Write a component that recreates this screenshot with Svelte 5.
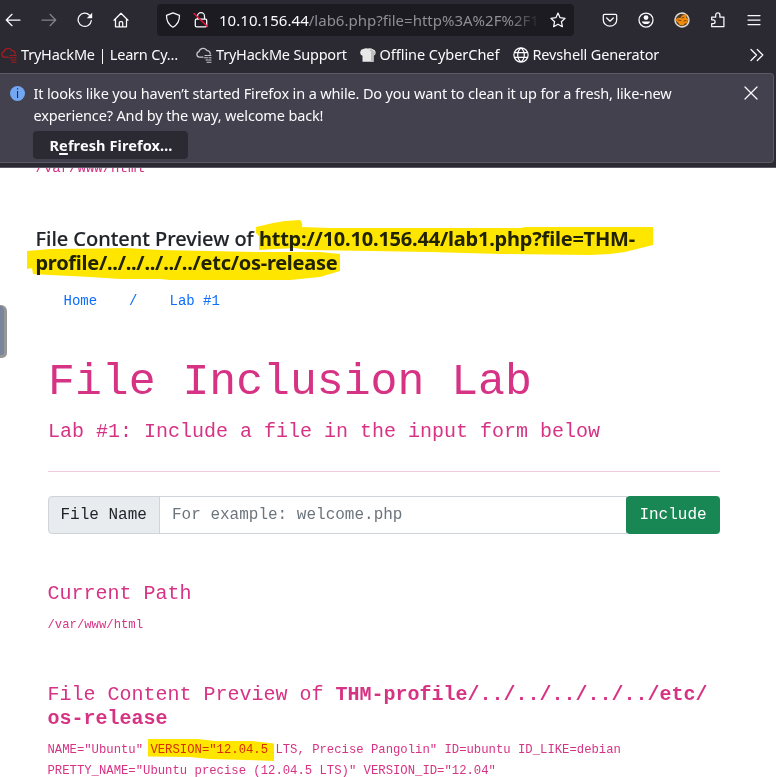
<script>
  const bookmarks = [
    { icon: 'cloud', label: 'TryHackMe | Learn Cy…', tone: '#a51c20', width: 195 },
    { icon: 'cloud', label: 'TryHackMe Support', tone: '#c9c9cd', width: 163.5 },
    { icon: 'chef', label: 'Offline CyberChef', tone: '#e8e8e8', width: 153 },
    { icon: 'globe', label: 'Revshell Generator', tone: '#fbfbfe', width: 170 }
  ];
</script>

<div class="window">
  <header class="chrome">
    <div class="toolbar">
      <nav class="nav">
        <svg viewBox="0 0 16 16"><path d="M15 8H1.5M7 2.3 1.3 8 7 13.7" /></svg>
        <svg viewBox="0 0 16 16" class="dim"><path d="M1 8h13.5M9 2.3 14.7 8 9 13.7" /></svg>
        <svg viewBox="0 0 16 16"><path d="M14.3 8.6A6.6 6.6 0 1 1 12.5 3.2" /><path d="M15.2.8v5.4H9.8z" fill="#fbfbfe" stroke="none" /></svg>
        <svg viewBox="0 0 16 16"><path d="M1 8.2 8 1.3l7 6.9M2.5 7v7.8h11V7M6.3 14.7v-4q0-1 1-1h1.4q1 0 1 1v4" /></svg>
      </nav>
      <div class="urlbar">
        <svg viewBox="0 0 16 16" class="shield"><path d="M8 .9 14.5 3.3C14.6 9.1 12.6 12.7 8 15.2 3.4 12.7 1.4 9.1 1.5 3.3z" /></svg>
        <svg viewBox="0 0 16 16" class="lock"><path d="M4.5 7V4.2a3.5 3.5 0 0 1 7 0V7M3.3 7.2h9.4q1 0 1 1v5.3q0 1.3-1.3 1.3H3.6q-1.3 0-1.3-1.3V8.2q0-1 1-1z" /><path d="m1 1.5 13.5 13" stroke="#e8123c" stroke-width="1.5" /></svg>
        <span class="url"><b>10.10.156.44</b>/lab6.php?file=http%3A%2F%2F1</span>
        <svg viewBox="0 0 16 16" class="star"><path d="m8 1.1 2.1 4.6 5 .6-3.7 3.4 1 5L8 12.2l-4.4 2.5 1-5L.9 6.3l5-.6z" /></svg>
      </div>
      <div class="tools">
        <svg viewBox="0 0 16 16"><path d="M2.5 2.3h11q1.2 0 1.2 1.2V8A6.7 6.2 0 0 1 1.3 8V3.5q0-1.2 1.2-1.2zM4.7 6 8 9.2 11.3 6" /></svg>
        <svg viewBox="0 0 16 16"><circle cx="8" cy="8" r="7" /><circle cx="8" cy="5.6" r="2.4" fill="#fbfbfe" stroke="none" /><path d="M3.8 9.4h8.4a4.4 3.8 0 0 1-8.4 0z" fill="#fbfbfe" stroke="none" /></svg>
        <svg viewBox="0 0 16 16" class="fox"><circle cx="8" cy="8" r="6.9" stroke="#ddd9d0" stroke-width="1.6" stroke-dasharray="5 1.2" fill="#4d3b27" /><path d="m1 8 3-2.3L6.3 6 8 3.5l5-1.2-1 3 2.7 2.3-1.3 1.5.3 2-3 .5-1.4 2-3.5-.6L4 10.5z" fill="#f28a0c" stroke="none" /><path d="m8 6 2-.7M4 8l3 .6M10 9l2-.3" stroke="#633409" stroke-width=".8" /></svg>
        <svg viewBox="0 0 16 16"><path d="M1.7 5.2h4V3a2.1 2.1 0 0 1 4.2 0v2.2h4v9.5H1.7v-3.1h1.5a1.9 1.9 0 0 0 0-3.8H1.7z" /></svg>
        <svg viewBox="0 0 16 16"><path d="M2 3.500h12M2 8h12M2 12.500h12" /></svg>
      </div>
    </div>

    <div class="bookmarks">
      {#each bookmarks as item, i}
        <span class="bookmark b{i}" style="width:{item.width}px; color:{item.tone}">
          <svg viewBox="0 0 16 16" class="bm-icon">
            {#if item.icon === 'cloud'}
              <path d="M7 10.2H3.5A2.8 2.8 0 0 1 3 4.7 4.3 4.3 0 0 1 11 3.6a3 3 0 0 1 3.2 3.5" stroke="currentColor" />
              <path d="M9 8.5h2m1 0h3M8.5 10.7h3m1.5 0h2M10 13h2m1 0h2M11 15.3h4" stroke="currentColor" stroke-width="1.1" stroke-dasharray="2 .6" />
            {:else if item.icon === 'chef'}
              <path d="M2.5 14.8V8.7A3.4 3.4 0 0 1 3.3 2.1 5 4 0 0 1 8 1.6a5 4 0 0 1 4.8.6 3.4 3.4 0 0 1 .8 6.5v6.1z" fill="currentColor" stroke="none" />
              <path d="M9 4h2v10.8h2.6V8.8A3.4 3.4 0 0 0 15 5L11 2z" fill="#bdbdbd" stroke="none" />
            {:else}
              <path d="M.9 8a7.1 7.1 0 1 0 14.2 0A7.1 7.1 0 1 0 .9 8M8 1C3.6 4.5 3.6 11.5 8 15c4.4-3.5 4.4-10.5 0-14M1.5 5.6h13M1.5 10.4h13" />
            {/if}
          </svg>
          <span class="bm-label">{item.label}</span>
        </span>
      {/each}
      <svg viewBox="0 0 16 16" class="more"><path d="m2 2.5 5.5 5.5L2 13.5M8.3 2.5l5.5 5.5-5.5 5.5" /></svg>
    </div>

    <section class="notice">
      <span class="info">i</span>
      <div class="message">
        <p>It looks like you haven’t started Firefox in a while. Do you want to clean it up for a fresh, like-new</p>
        <p>experience? And by the way, welcome back!</p>
        <button class="refresh">R<u>e</u>fresh Firefox…</button>
      </div>
      <svg viewBox="0 0 16 16" class="close"><path d="m2 2 12 12M14 2 2 14" /></svg>
    </section>
  </header>

  <main>
    <p class="outer-path">/var/www/html</p>
    <h5 class="outer-title">
      <span class="t1">File Content Preview of</span> <b class="t2">http://10.10.156.44/lab1.php?file=THM-</b><br /><b class="t3">profile/../../../../../etc/os-release</b>
    </h5>
    <nav class="crumbs"><span>Home</span><span>/</span><span>Lab #1</span></nav>
    <div class="lab">
      <h1>File Inclusion Lab</h1>
      <p class="lead">Lab #1: Include a file in the input form below</p>
      <hr />
      <div class="group">
        <span class="prefix">File Name</span>
        <input type="text" placeholder="For example: welcome.php" />
        <button class="include">Include</button>
      </div>
      <h5 class="current">Current Path</h5>
      <p class="small">/var/www/html</p>
      <h5 class="preview">File Content Preview of <b>THM-profile/../../../../../etc/<br />os-release</b></h5>
      <p class="small output">NAME="Ubuntu" VERSION="12.04.5 LTS, Precise Pangolin" ID=ubuntu ID_LIKE=debian<br />PRETTY_NAME="Ubuntu precise (12.04.5 LTS)" VERSION_ID="12.04"</p>
    </div>
  </main>

  <span class="side-tab"></span>
  <svg class="marker" viewBox="0 0 776 777">
    <path d="M256 227 273 223 285 221 300 220Q303 222 302 227L330 228H520L526 227H653V245L625 252 610 254 590 255 500 254 430 252 370 251 308 250 295 248 259 250V236L256 233z" />
    <path d="M27 251 50 249 100 248.500 125 248 160 250 210 251 260 252 320 252 340 254V271L320 277 290 280H170L160 279 120 279 90 277 50 275 33 274 32 268 27 269z" />
    <path d="M148 739H198L215 741H252L274 743.500V761L262 760.500 210 759 190 757 148 756.500z" />
  </svg>
</div>

<style>
  :global(body) { margin: 0; background: #fff; }
  * { box-sizing: border-box; }
  p, h1, h5 { margin: 0; font-weight: 400; }
  .window { position: relative; width: 776px; height: 777px; overflow: hidden; background: #fff; font-family: "Noto Sans", "Open Sans", sans-serif; }
  svg { width: 16px; height: 16px; flex: none; fill: none; stroke: #fbfbfe; stroke-width: 1.25; stroke-linejoin: round; stroke-linecap: round; }
  .chrome { position: relative; height: 168px; background: #2b2a33; color: #fbfbfe; border-bottom: 1px solid #5b5b66; }
  .toolbar { height: 40px; display: flex; align-items: center; }
  .nav { width: 157px; padding-left: 5px; display: flex; gap: 20px; }
  .dim { opacity: .42; }
  .urlbar { width: 417px; height: 32px; border-radius: 4px; background: #1c1b22; display: flex; align-items: center; padding: 0 8px; }
  .lock { margin-left: 12px; }
  .url { width: 322px; margin-left: 10px; overflow: hidden; white-space: nowrap; font-size: 15px; line-height: 30px; color: #8f8e96; -webkit-mask-image: linear-gradient(90deg, #000 90%, transparent); mask-image: linear-gradient(90deg, #000 90%, transparent); }
  .url b { font-weight: 400; color: #fbfbfe; letter-spacing: .04px; }
  .star { margin-left: auto; }
  .tools { margin-left: 28px; display: flex; gap: 20px; }
  .bookmarks { height: 33px; display: flex; align-items: center; padding-left: 1px; padding-bottom: 4px; }
  .bookmark { display: flex; align-items: center; gap: 4px; white-space: nowrap; }
  .bm-label { color: #fbfbfe; font-size: 14.5px; line-height: 24px; letter-spacing: -.2px; margin-top: -2px; }
  .b2 .bm-label { letter-spacing: -.04px; }
  .b3 .bm-label { letter-spacing: -.15px; }
  .more { margin-left: auto; margin-right: 11px; }
  .notice { height: 90px; width: 774px; border: 1px solid #5b5b66; border-left: 0; border-radius: 0 4px 4px 0; background: #42414d; display: flex; align-items: flex-start; padding-left: 10px; }
  .info { width: 15px; height: 15px; margin-top: 12px; border-radius: 50%; background: #73a7f3; color: #2b2a33; font-size: 12px; line-height: 15px; text-align: center; }
  .message { margin-left: 8px; padding-top: 8px; width: 700px; font-size: 14.5px; line-height: 22px; white-space: nowrap; letter-spacing: -.145px; }
  .message p { padding-left: .5px; }
  .refresh { display: block; margin-top: 5px; width: 155px; height: 28px; padding: 0 0 0 1px; border: 0; border-radius: 4px; background: #2b2a33; color: #fbfbfe; font: 700 14.5px/28px "Noto Sans", sans-serif; letter-spacing: .1px; }
  .refresh u { text-decoration-thickness: 2px; text-underline-offset: 2px; }
  .close { margin: 11px 0 0 10px; }

  main { height: 609px; padding-left: 35.5px; overflow: hidden; color: #212529; }
  .outer-path { margin-top: -10px; font: 14px/21px "Liberation Mono", monospace; color: #d63384; }
  .outer-title { margin-top: 48px; font-size: 20px; line-height: 24px; height: 48px; white-space: nowrap; font-weight: 500; }
  .t1 { -webkit-text-stroke: .15px #212529; letter-spacing: -.04px; }
  .t2 { letter-spacing: -.21px; }
  .t3 { letter-spacing: -.27px; }
  b { font-weight: 700; }
  .crumbs { margin-top: 16px; padding-left: 28px; display: flex; gap: 32px; font: 14px/21px "Liberation Mono", monospace; color: #0d6efd; }
  .lab { width: 672px; margin-left: 12.5px; font-family: "Liberation Mono", monospace; color: #d63384; }
  h1 { margin-top: 43px; font-size: 44.8px; line-height: 54px; }
  .lead { margin-top: 11px; font-size: 20px; line-height: 24px; }
  hr { margin: 27px 0 24px; height: 1px; border: 0; background: #f0cadd; }
  .group { display: flex; height: 38px; font-size: 16px; }
  .prefix { width: 112px; padding: 6px 0 0 11.5px; background: #e9ecef; border: 1px solid #ced4da; border-radius: 4px 0 0 4px; color: #212529; line-height: 24px; }
  input { width: 468px; margin-left: -1px; padding: 6px 12px; border: 1px solid #ced4da; background: #fff; font: 16px/24px "Liberation Mono", monospace; }
  input::placeholder { color: #6c757d; opacity: 1; }
  .include { width: 94px; margin-left: -1px; padding: 0; border: 0; border-radius: 4px; background: #198754; color: #fff; font: 16px/24px "Liberation Mono", monospace; }
  .current, .small, .preview { margin-left: -.5px; }
  .current { margin-top: 48px; font-size: 20px; line-height: 24px; }
  .small { margin-top: 9px; font-size: 12.25px; line-height: 21px; white-space: nowrap; }
  .preview { margin-top: 47px; font-size: 20px; line-height: 24px; white-space: nowrap; }
  .side-tab { position: absolute; left: 0; top: 305px; width: 7px; height: 53px; border: solid #979797; border-width: 1px 3px 3px 0; border-radius: 0 6px 5px 0; background: #78859b; }
  .marker { position: absolute; inset: 0; width: 776px; height: 777px; fill: #ffe600; stroke: none; mix-blend-mode: multiply; pointer-events: none; }
</style>
